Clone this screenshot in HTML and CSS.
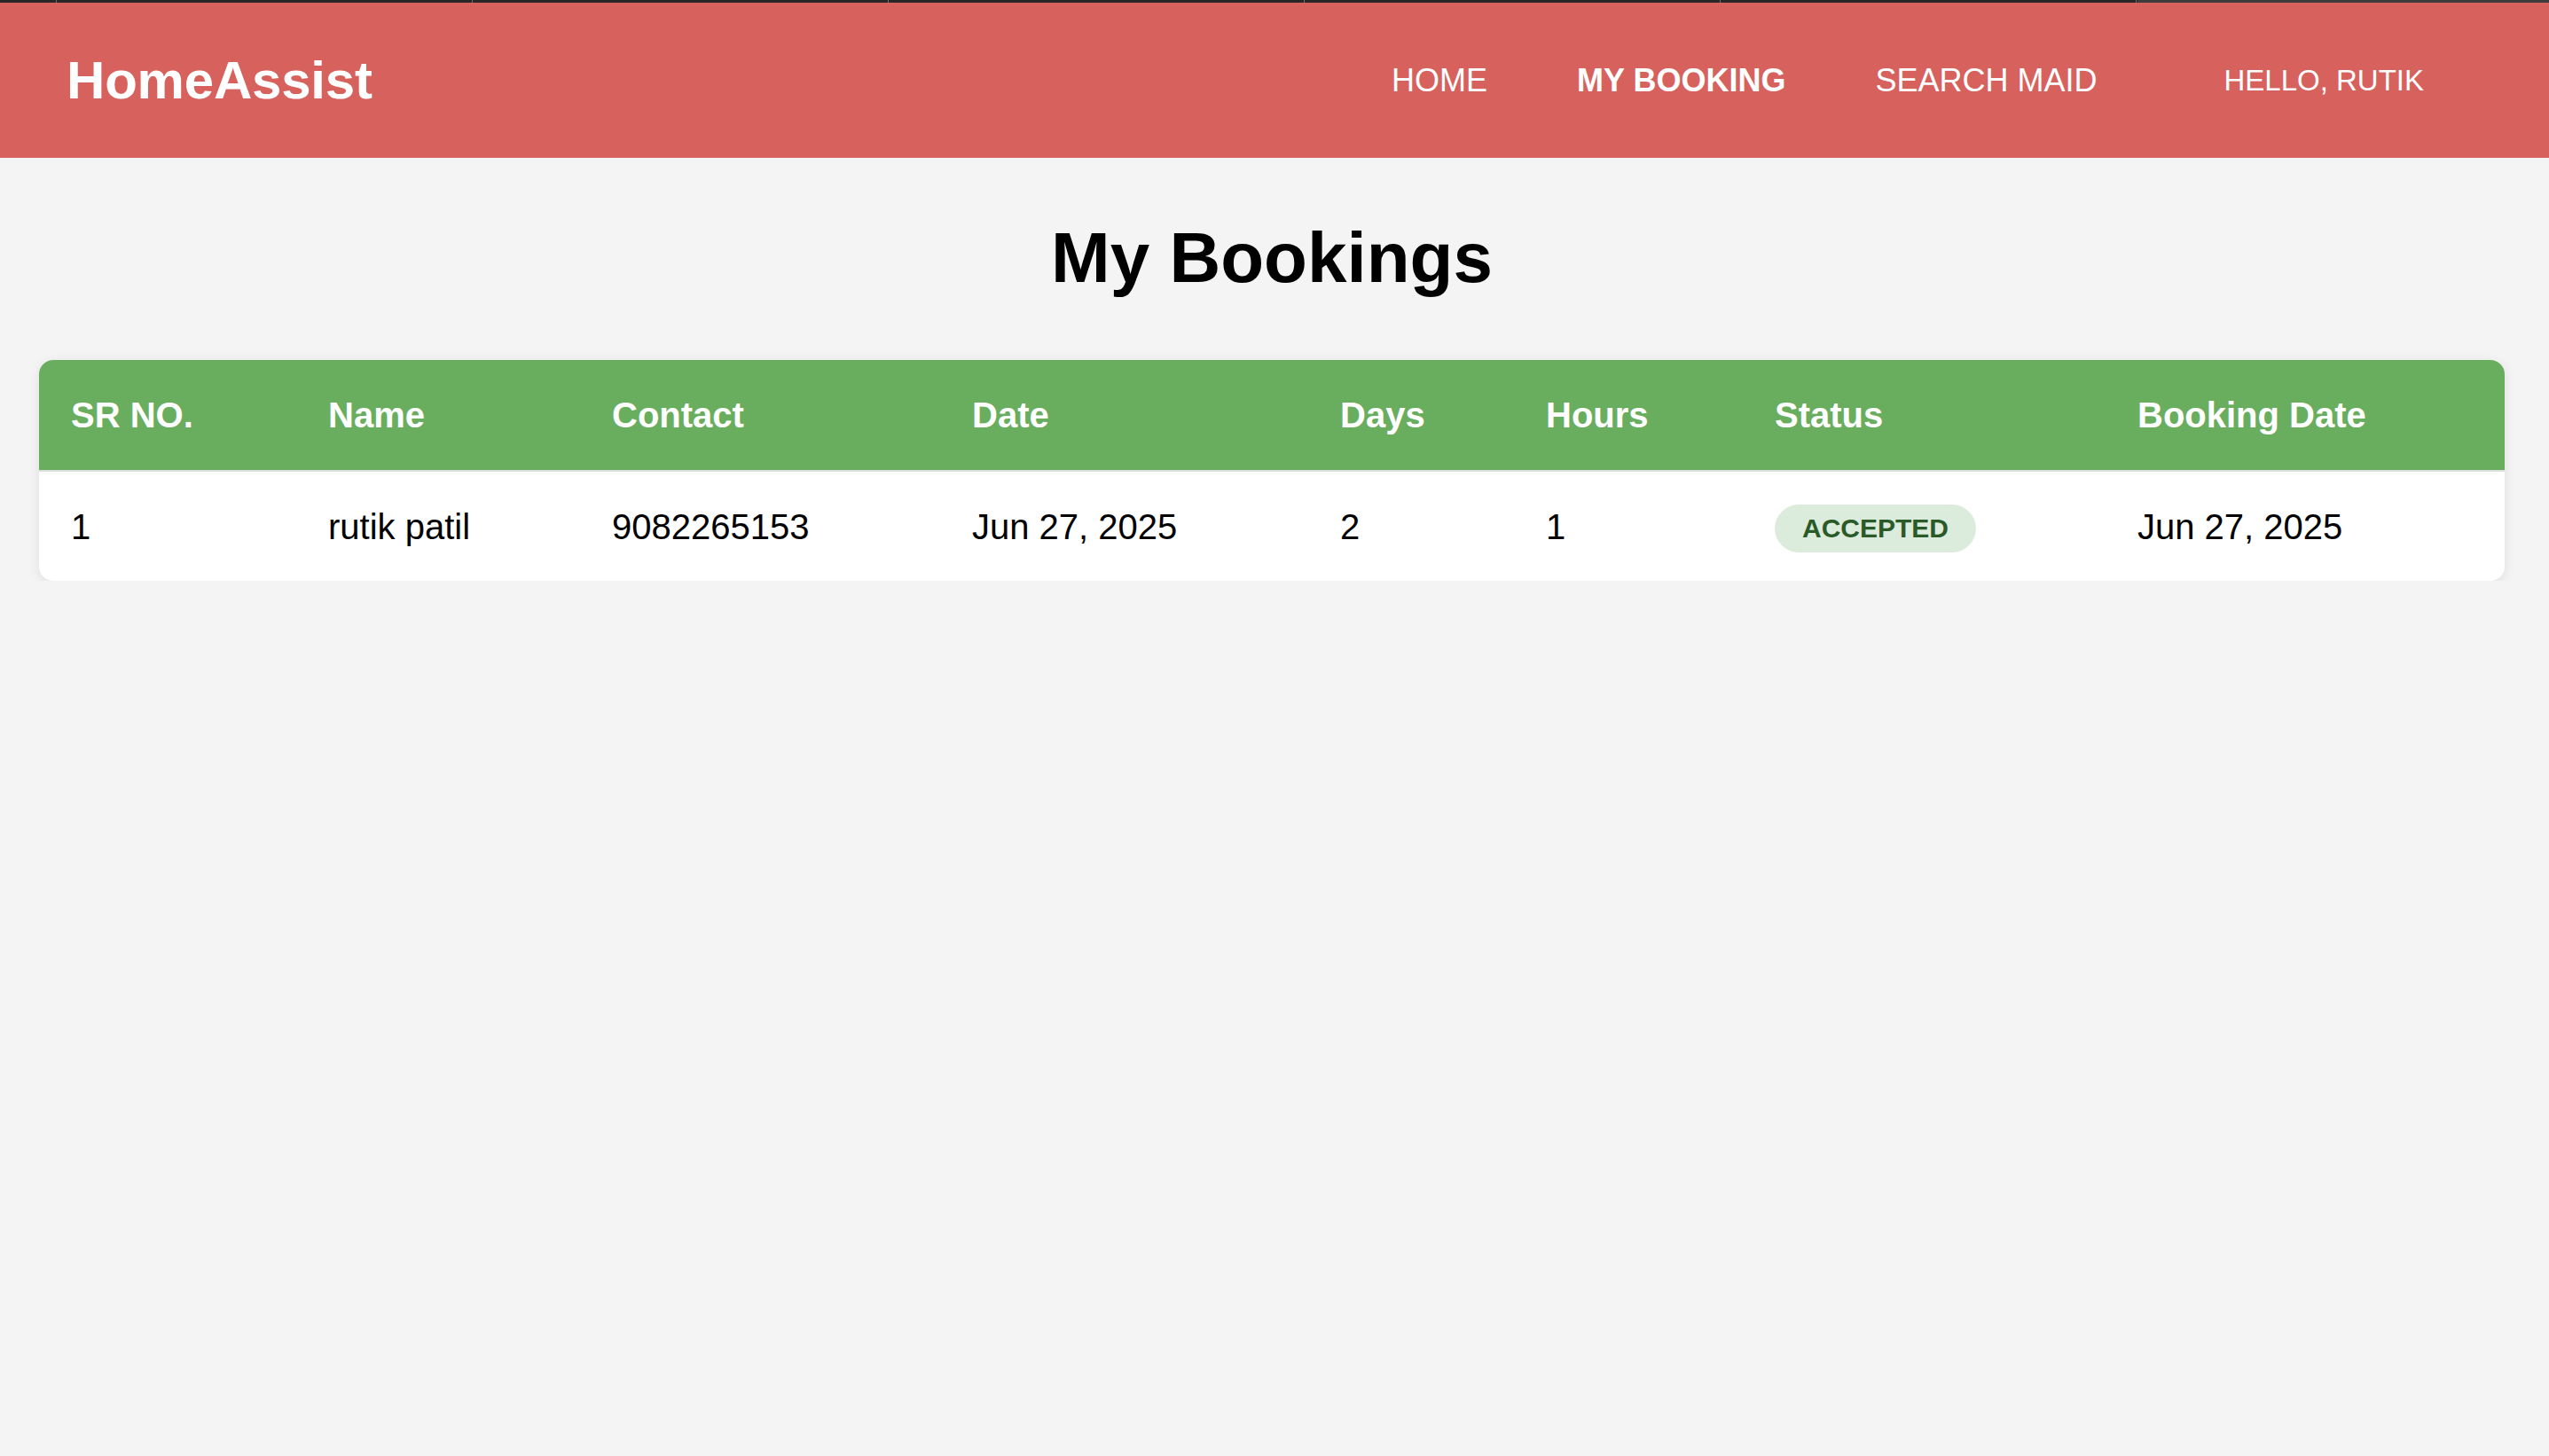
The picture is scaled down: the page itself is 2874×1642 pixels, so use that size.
FILE: index.html
```html
<!DOCTYPE html>
<html lang="en">
<head>
<meta charset="utf-8">
<title>My Bookings - HomeAssist</title>
<link rel="stylesheet" href="styles.css">
</head>
<body>
<div class="topstrip"></div>
<header class="navbar">
  <div class="logo">HomeAssist</div>
  <nav class="nav">
    <a class="nav-link" href="#">HOME</a>
    <a class="nav-link active" href="#">MY BOOKING</a>
    <a class="nav-link" href="#">SEARCH MAID</a>
    <span class="greeting">HELLO, RUTIK</span>
  </nav>
</header>
<main class="content">
  <h1 class="title">My Bookings</h1>
  <div class="card">
    <table class="bookings">
      <colgroup>
        <col class="c1"><col class="c2"><col class="c3"><col class="c4">
        <col class="c5"><col class="c6"><col class="c7"><col class="c8">
      </colgroup>
      <thead>
        <tr>
          <th>SR NO.</th>
          <th>Name</th>
          <th>Contact</th>
          <th>Date</th>
          <th>Days</th>
          <th>Hours</th>
          <th>Status</th>
          <th>Booking Date</th>
        </tr>
      </thead>
      <tbody>
        <tr>
          <td>1</td>
          <td>rutik patil</td>
          <td>9082265153</td>
          <td>Jun 27, 2025</td>
          <td>2</td>
          <td>1</td>
          <td><span class="badge">ACCEPTED</span></td>
          <td>Jun 27, 2025</td>
        </tr>
      </tbody>
    </table>
  </div>
</main>
</body>
</html>
```
FILE: styles.css
```css
* { box-sizing: border-box; }

html, body {
  margin: 0;
  padding: 0;
}

body {
  background: #f4f4f4;
  font-family: "Liberation Sans", Arial, Helvetica, sans-serif;
  color: #000;
}

.topstrip {
  height: 3px;
  background:
    linear-gradient(to right, transparent 0, transparent 2410px, #3c3c3c 2410px),
    repeating-linear-gradient(to right, #262626 0, #262626 468px, #6a6a6a 468px, #6a6a6a 469px);
  background-position: 0 0, -405px 0;
  background-color: #262626;
}

.navbar {
  height: 175px;
  background: #d7615d;
  display: flex;
  align-items: center;
  justify-content: space-between;
  padding: 0 141px 0 75px;
}

.logo {
  color: #fff;
  font-weight: 700;
  font-size: 60px;
  letter-spacing: -0.2px;
}

.nav {
  display: flex;
  align-items: center;
  gap: 101px;
}

.nav-link {
  color: #fff;
  text-decoration: none;
  font-size: 36px;
}

.nav-link.active {
  font-weight: 700;
}

.greeting {
  color: #fff;
  font-size: 33px;
  margin-left: 42px;
}

.content {
  padding: 0 50px 0 44px;
}

.title {
  margin: 67px 0 69px;
  text-align: center;
  font-size: 80px;
  font-weight: 700;
  color: #000;
}

.card {
  background: #fff;
  border-radius: 16px;
  overflow: hidden;
  box-shadow: 0 3px 14px rgba(0, 0, 0, 0.09);
}

.bookings {
  width: 100%;
  border-collapse: collapse;
  table-layout: fixed;
}

.c1 { width: 290px; }
.c2 { width: 320px; }
.c3 { width: 406px; }
.c4 { width: 415px; }
.c5 { width: 232px; }
.c6 { width: 258px; }
.c7 { width: 409px; }
.c8 { width: 450px; }

.bookings th,
.bookings td {
  text-align: left;
  padding: 39px 36px;
  line-height: 46px;
  font-size: 40px;
  white-space: nowrap;
}

.bookings th {
  background: #69ae5e;
  color: #fff;
  font-weight: 700;
  border-bottom: 2px solid #dedede;
}

.bookings td {
  color: #000;
  padding-top: 38px;
  padding-bottom: 38px;
}

.badge {
  display: inline-block;
  background: #dcecdc;
  color: #2a5a28;
  font-weight: 700;
  font-size: 30px;
  line-height: 34px;
  padding: 10px 31px;
  margin: -6px 0;
  border-radius: 27px;
  vertical-align: middle;
}
```
